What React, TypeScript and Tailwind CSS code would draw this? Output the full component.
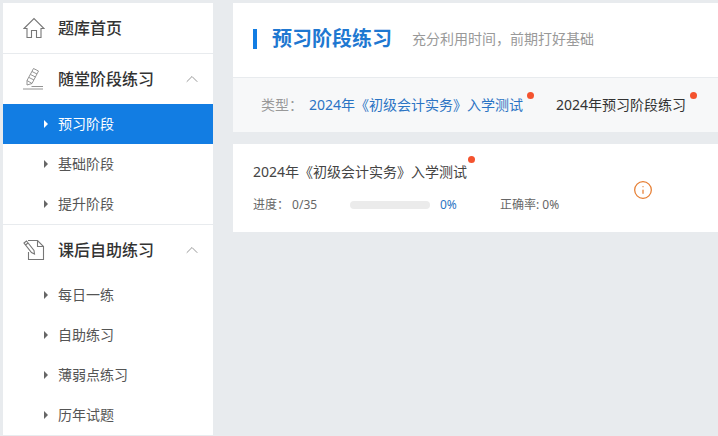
import React from 'react';
import { ChevronUp, Info } from 'lucide-react';

const font = { fontFamily: '"Noto Sans", "Noto Sans CJK SC", sans-serif' };

function HomeIcon() {
    return (
        <svg width="22" height="22" viewBox="0 0 22 22" fill="none" stroke="#777" strokeWidth="1.1">
            <path d="M1 11.5 L11 1.5 L21 11.5 L18 11.5 L18 20.5 L13.5 20.5 L13.5 13.5 L8.5 13.5 L8.5 20.5 L4 20.5 L4 11.5 Z" />
        </svg>
    );
}

function PencilIcon() {
    return (
        <svg width="22" height="22" viewBox="0 0 22 22" fill="none" stroke="#888" strokeWidth="0.9">
            <path d="M10.5 0.5 L15.5 3 L9 15.5 L4 17 L4 12.5 Z" />
            <path d="M9 3.5 L14 6 M7.5 6.5 L12.5 9 M6 9.5 L11 12 M4 12.5 L9 15.5" />
            <path d="M0 21 L20 21 M8.5 18.5 L20 18.5" />
        </svg>
    );
}

function DocIcon() {
    return (
        <svg width="22" height="22" viewBox="0 0 22 22" fill="none" stroke="#777" strokeWidth="1.1">
            <path d="M5 1.5 L14.5 1.5 L20.5 7.5 L20.5 20.5 L5.5 20.5 L5.5 13" />
            <path d="M14.5 1.5 L14.5 7.5 L20.5 7.5" />
            <path d="M1 4 L3.5 2 L11 11.5 L11.5 15 L8.5 13.5 Z M2.5 6 L5 4" />
        </svg>
    );
}

function SubItem({ label, active }: { label: string; active?: boolean }) {
    return (
        <div className={`h-10 flex items-center pl-[41px] text-sm ${active ? 'bg-[#127de3] text-white' : 'text-[#555]'}`}>
            <span className={`w-0 h-0 mr-[10px] border-y-[4px] border-y-transparent border-l-[4px] ${active ? 'border-l-white' : 'border-l-[#666]'}`}></span>
            {label}
        </div>
    );
}

function SectionHead({ icon, label }: { icon: React.ReactNode; label: string }) {
    return (
        <div className="h-[50px] flex items-center pl-5 pr-[11px]">
            <span className="w-[35px] flex shrink-0">{icon}</span>
            <span className="text-base font-medium text-[#333]">{label}</span>
            <ChevronUp className="ml-auto text-[#999]" size={20} strokeWidth={1.2} />
        </div>
    );
}

function Dot({ className }: { className: string }) {
    return <span className={`absolute w-[7px] h-[7px] rounded-full bg-[#f4532f] ${className}`}></span>;
}

export default function App() {
    return (
        <div className="w-[718px] h-[436px] overflow-hidden bg-[#e8ebee] flex pt-[3px] pl-[3px]" style={font}>
            <aside className="w-[210px] h-[432px] bg-white shrink-0">
                <div className="h-[51px] flex items-center pl-5 border-b border-[#e8ebee]">
                    <span className="w-[35px] flex shrink-0"><HomeIcon /></span>
                    <span className="text-base font-medium text-[#333]">题库首页</span>
                </div>
                <SectionHead icon={<PencilIcon />} label="随堂阶段练习" />
                <SubItem label="预习阶段" active />
                <SubItem label="基础阶段" />
                <SubItem label="提升阶段" />
                <div className="border-t border-[#e8ebee]">
                    <SectionHead icon={<DocIcon />} label="课后自助练习" />
                    <SubItem label="每日一练" />
                    <SubItem label="自助练习" />
                    <SubItem label="薄弱点练习" />
                    <SubItem label="历年试题" />
                </div>
            </aside>

            <main className="ml-5 flex-1 min-w-0">
                <div className="bg-white">
                    <div className="h-[74px] flex items-center pl-5 pb-[3px]">
                        <span className="w-1 h-5 bg-[#127de3]"></span>
                        <h1 className="ml-[15px] text-xl font-bold text-[#1f78d1] leading-none">预习阶段练习</h1>
                        <span className="ml-5 text-sm text-[#999]">充分利用时间，前期打好基础</span>
                    </div>
                    <div className="h-[55px] border-t border-[#e8ebee] bg-[#f7f8f9] flex items-center pl-7 text-sm">
                        <span className="text-[#999] w-12">类型：</span>
                        <span className="relative text-[#2b74c4]">
                            2024年《初级会计实务》入学测试
                            <Dot className="-right-[11px] -top-[3px]" />
                        </span>
                        <span className="relative ml-[33px] text-[#333]">
                            2024年预习阶段练习
                            <Dot className="-right-[11px] -top-[3px]" />
                        </span>
                    </div>
                </div>

                <div className="mt-3 h-[88px] bg-white pl-5 relative">
                    <div className="pt-[18px] text-sm text-[#444] leading-5">
                        <span className="relative">
                            2024年《初级会计实务》入学测试
                            <Dot className="-right-[8px] -top-[6px]" />
                        </span>
                    </div>
                    <div className="mt-[15px] flex items-center text-xs text-[#666] leading-4">
                        <span className="w-[97px]">进度：&nbsp;0/35</span>
                        <span className="w-20 h-2 rounded bg-[#ebebeb]"></span>
                        <span className="ml-[10px] w-[60px] text-[#2b74c4]">0%</span>
                        <span>正确率: 0%</span>
                    </div>
                    <Info className="absolute left-[400px] top-9 text-[#e67e32]" size={20} strokeWidth={1.5} />
                </div>
            </main>
        </div>
    );
}
